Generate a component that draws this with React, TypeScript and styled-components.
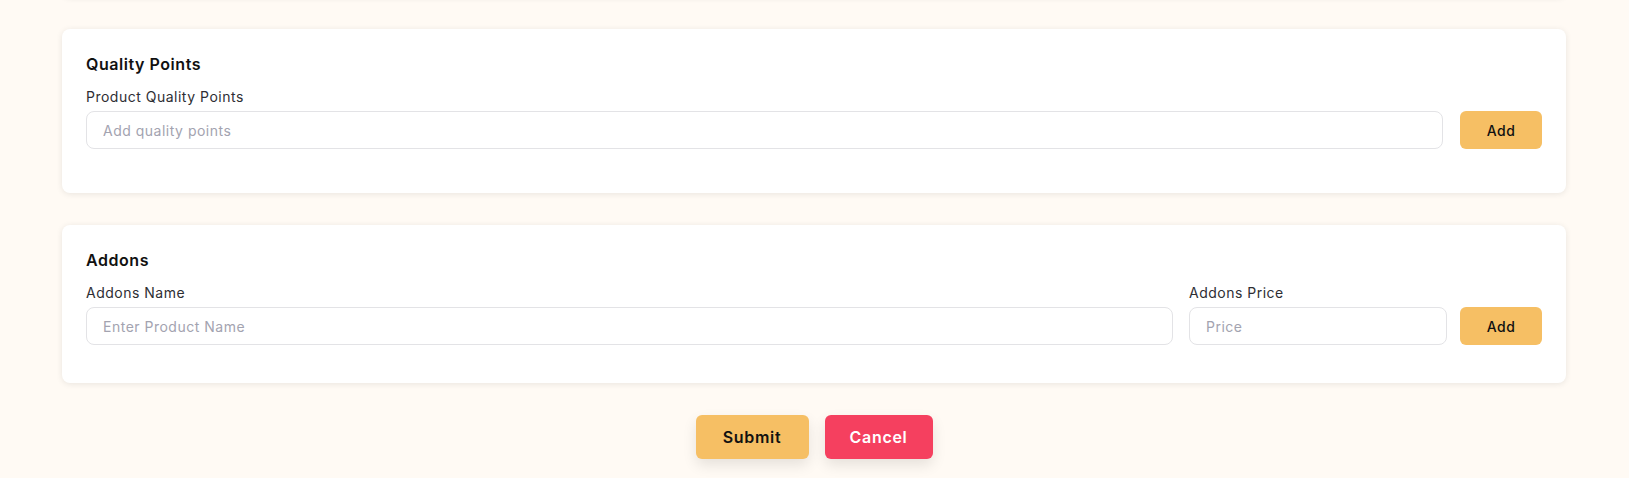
import React from "react";
import styled, { createGlobalStyle } from "styled-components";

const GlobalStyle = createGlobalStyle`
  html, body {
    margin: 0;
    padding: 0;
    background: #fffaf4;
    font-family: "Inter", "Open Sans", sans-serif;
    overflow: hidden;
  }
  * { box-sizing: border-box; }
`;

const Page = styled.div`
  display: flex;
  flex-direction: column;
  gap: 32px;
  padding: 0 63px 32px 62px;
  margin-top: -103px;
`;

const Card = styled.section<{ $padBottom: number; $height?: number }>`
  background: #ffffff;
  border-radius: 8px;
  box-shadow: 0 1px 6px rgba(0, 0, 0, 0.09);
  padding: 23px 24px ${(p) => p.$padBottom}px 24px;
  ${(p) => (p.$height ? `height: ${p.$height}px;` : "")}
`;

const CardTitle = styled.h3`
  margin: 0 0 11px 0;
  font-size: 16px;
  line-height: 24px;
  font-weight: 600;
  letter-spacing: 0.55px;
  color: #111111;
`;

const Row = styled.div`
  display: flex;
  align-items: flex-end;
  gap: 16px;
`;

const Field = styled.div<{ $width?: number }>`
  display: flex;
  flex-direction: column;
  gap: 4px;
  ${(p) => (p.$width ? `width: ${p.$width}px; flex: none;` : "flex: 1;")}
`;

const Label = styled.label`
  font-size: 14px;
  line-height: 20px;
  letter-spacing: 0.5px;
  color: #2e2e33;
`;

const Input = styled.input`
  height: 38px;
  width: 100%;
  border: 1px solid #e3e3e6;
  border-radius: 8px;
  padding: 0 16px;
  font-family: inherit;
  font-size: 14px;
  letter-spacing: 0.5px;
  color: #222;
  background: #fff;
  outline: none;
  &::placeholder {
    color: #a3a3b0;
  }
`;

const AddButton = styled.button<{ $gap?: number }>`
  flex: none;
  width: 82px;
  height: 38px;
  border: none;
  border-radius: 6px;
  background: #f6bf64;
  color: #111;
  font-family: inherit;
  font-size: 14px;
  font-weight: 500;
  letter-spacing: 0.5px;
  margin-left: ${(p) => p.$gap ?? 0}px;
  cursor: pointer;
`;

const Actions = styled.div`
  display: flex;
  justify-content: center;
  gap: 16px;
`;

const ActionButton = styled.button<{ $variant: "primary" | "danger"; $width: number }>`
  width: ${(p) => p.$width}px;
  height: 44px;
  border: none;
  border-radius: 6px;
  font-family: inherit;
  font-size: 16px;
  font-weight: 600;
  letter-spacing: 0.7px;
  background: ${(p) => (p.$variant === "primary" ? "#f6bf64" : "#f5405f")};
  color: ${(p) => (p.$variant === "primary" ? "#111" : "#fff")};
  box-shadow: 0 6px 14px rgba(0, 0, 0, 0.1);
  cursor: pointer;
`;

export default function App() {
  return (
    <>
      <GlobalStyle />
      <Page>
        <Card $padBottom={24} $height={100} />
        <Card $padBottom={44}>
          <CardTitle>Quality Points</CardTitle>
          <Row>
            <Field>
              <Label>Product Quality Points</Label>
              <Input placeholder="Add quality points" />
            </Field>
            <AddButton $gap={1}>Add</AddButton>
          </Row>
        </Card>
        <Card $padBottom={38}>
          <CardTitle>Addons</CardTitle>
          <Row>
            <Field>
              <Label>Addons Name</Label>
              <Input placeholder="Enter Product Name" />
            </Field>
            <Field $width={258}>
              <Label>Addons Price</Label>
              <Input placeholder="Price" />
            </Field>
            <AddButton $gap={-3}>Add</AddButton>
          </Row>
        </Card>
        <Actions>
          <ActionButton $variant="primary" $width={113}>
            Submit
          </ActionButton>
          <ActionButton $variant="danger" $width={108}>
            Cancel
          </ActionButton>
        </Actions>
      </Page>
    </>
  );
}
